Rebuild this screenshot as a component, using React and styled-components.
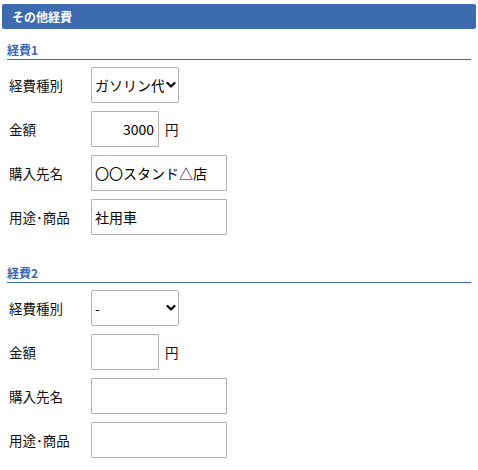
import React from "react";
import styled, { createGlobalStyle } from "styled-components";

const Global = createGlobalStyle`
  html, body { margin: 0; padding: 0; background: #fff; }
  body {
    font-family: "Noto Sans CJK JP", "Noto Sans", sans-serif;
    color: #222;
  }
  * { box-sizing: border-box; }
`;

const Page = styled.div`
  width: 478px;
  padding: 4px 2px 0 2px;
  display: flex;
  flex-direction: column;
`;

const TitleBar = styled.div`
  height: 25px;
  background: #3e6baf;
  border-radius: 2px;
  color: #fff;
  font-weight: bold;
  font-size: 12px;
  line-height: 25px;
  padding-left: 10px;
  margin-bottom: 12px;
`;

const Sections = styled.div`
  display: flex;
  flex-direction: column;
  gap: 29px;
  padding: 0 5px;
`;

const Section = styled.section`
  display: flex;
  flex-direction: column;
`;

const SectionHead = styled.div`
  font-size: 12px;
  font-weight: bold;
  color: #3d6aae;
  line-height: 18px;
  height: 19px;
  border-bottom: 1px solid #3d6aae;
  margin-bottom: 7px;
  width: 464px;
`;

const Rows = styled.div`
  display: flex;
  flex-direction: column;
  gap: 8px;
  padding-left: 2px;
`;

const Row = styled.div`
  display: flex;
  align-items: center;
  height: 36px;
`;

const Label = styled.div`
  width: 82px;
  font-size: 13.5px;
  color: #111;
`;

const Field = styled.input`
  height: 36px;
  width: ${(p) => p.$w}px;
  border: 1px solid #b3b3b3;
  border-radius: 1px;
  font-family: inherit;
  font-size: 14px;
  color: #000;
  padding: 0 4px 0 3px;
  text-align: ${(p) => (p.$right ? "right" : "left")};
  outline: none;
  background: #fff;
`;

const Unit = styled.span`
  font-size: 13.5px;
  margin-left: 6px;
  color: #111;
`;

const SelectBox = styled.div`
  position: relative;
  width: 88px;
  height: 36px;
`;

const Select = styled.select`
  appearance: none;
  -webkit-appearance: none;
  width: 100%;
  height: 100%;
  border: 1px solid #b3b3b3;
  border-radius: 2px;
  background: #fff;
  font-family: inherit;
  font-size: 14px;
  color: #000;
  padding: 0 14px 0 3px;
  outline: none;
  white-space: nowrap;
  overflow: hidden;
`;

const Chevron = styled.svg`
  position: absolute;
  right: 3px;
  top: 50%;
  transform: translateY(-50%);
  pointer-events: none;
`;

const ChevronIcon = () => (
  <Chevron width="10" height="7" viewBox="0 0 10 7">
    <path d="M1.5 1.5 L5 5 L8.5 1.5" fill="none" stroke="#111" strokeWidth="2.4" strokeLinecap="round" strokeLinejoin="round" />
  </Chevron>
);

const Expense = ({ n, type, amount, shop, use }) => (
  <Section>
    <SectionHead>経費{n}</SectionHead>
    <Rows>
      <Row>
        <Label>経費種別</Label>
        <SelectBox>
          <Select defaultValue={type}>
            <option value="-">-</option>
            <option value="ガソリン代">ガソリン代</option>
          </Select>
          <ChevronIcon />
        </SelectBox>
      </Row>
      <Row>
        <Label>金額</Label>
        <Field $w={68} $right defaultValue={amount} />
        <Unit>円</Unit>
      </Row>
      <Row>
        <Label>購入先名</Label>
        <Field $w={136} defaultValue={shop} />
      </Row>
      <Row>
        <Label>用途･商品</Label>
        <Field $w={136} defaultValue={use} />
      </Row>
    </Rows>
  </Section>
);

export default function App() {
  return (
    <>
      <Global />
      <Page>
        <TitleBar>その他経費</TitleBar>
        <Sections>
          <Expense n="1" type="ガソリン代" amount="3000" shop="〇〇スタンド△店" use="社用車" />
          <Expense n="2" type="-" amount="" shop="" use="" />
        </Sections>
      </Page>
    </>
  );
}
